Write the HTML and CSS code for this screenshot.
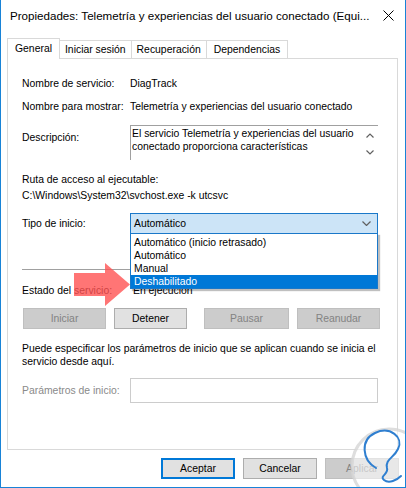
FILE: index.html
```html
<!DOCTYPE html>
<html lang="es">
<head>
  <meta charset="UTF-8" />
  <title>Propiedades: Telemetría y experiencias del usuario conectado</title>
  <link rel="stylesheet" href="styles.css">
</head>
<body>
  <div class="window">
    <div class="titlebar">
      <span class="title">Propiedades: Telemetría y experiencias del usuario conectado (Equi...</span>
      <svg class="close" width="11" height="11" viewBox="0 0 11 11">
        <path d="M0.5 0.5 L10.5 10.5 M10.5 0.5 L0.5 10.5" stroke="#000" stroke-width="1" fill="none"/>
      </svg>
    </div>

    <div class="tabs">
      <div class="tab active">General</div>
      <div class="tab">Iniciar sesión</div>
      <div class="tab">Recuperación</div>
      <div class="tab">Dependencias</div>
    </div>

    <div class="panel">
      <div class="row r-name">
        <span class="label">Nombre de servicio:</span>
        <span>DiagTrack</span>
      </div>
      <div class="row r-display">
        <span class="label">Nombre para mostrar:</span>
        <span>Telemetría y experiencias del usuario conectado</span>
      </div>
      <div class="row r-desc">
        <span class="label desc-label">Descripción:</span>
        <div class="desc-box">
          <div class="desc-text">El servicio Telemetría y experiencias del usuario conectado proporciona características</div>
          <div class="scroll">
            <svg width="8" height="5" viewBox="0 0 8 5"><path d="M0.5 4.5 L4 1 L7.5 4.5" stroke="#606060" stroke-width="1.2" fill="none"/></svg>
            <svg width="8" height="5" viewBox="0 0 8 5"><path d="M0.5 0.5 L4 4 L7.5 0.5" stroke="#606060" stroke-width="1.2" fill="none"/></svg>
          </div>
        </div>
      </div>
      <div class="path-label">Ruta de acceso al ejecutable:</div>
      <div class="path">C:\Windows\System32\svchost.exe -k utcsvc</div>

      <div class="row r-type">
        <span class="label">Tipo de inicio:</span>
        <div class="combo">
          <span>Automático</span>
          <svg width="9" height="5" viewBox="0 0 9 5"><path d="M0.5 0.5 L4.5 4.5 L8.5 0.5" stroke="#606060" stroke-width="1.2" fill="none"/></svg>
          <ul class="dropdown">
            <li>Automático (inicio retrasado)</li>
            <li>Automático</li>
            <li>Manual</li>
            <li class="selected">Deshabilitado</li>
          </ul>
        </div>
      </div>

      <div class="separator"></div>

      <div class="row r-state">
        <span class="label">Estado del servicio:</span>
        <span class="state">En ejecución</span>
      </div>

      <div class="service-buttons">
        <button class="btn disabled b-start">Iniciar</button>
        <button class="btn b-stop">Detener</button>
        <button class="btn disabled b-pause">Pausar</button>
        <button class="btn disabled b-resume">Reanudar</button>
      </div>

      <p class="hint">Puede especificar los parámetros de inicio que se aplican cuando se inicia el servicio desde aquí.</p>

      <div class="row r-params">
        <span class="label muted">Parámetros de inicio:</span>
        <div class="input"></div>
      </div>
    </div>

    <div class="footer">
      <button class="btn primary">Aceptar</button>
      <button class="btn">Cancelar</button>
      <button class="btn disabled">Aplicar</button>
    </div>

    <!-- red pointer over the dialog -->
    <svg class="arrow" width="62" height="50" viewBox="0 0 62 50">
      <polygon points="3,10 34,10 34,0 59,21.5 34,43 34,33 3,33" fill="#ff5252" fill-opacity="0.8"/>
    </svg>

    <!-- watermark -->
    <svg class="watermark" width="84" height="84" viewBox="0 0 84 84">
      <circle cx="44" cy="48" r="37" fill="#ffffff" fill-opacity="0.55" stroke="#d6d6d6" stroke-opacity="0.8" stroke-width="3"/>
      <path d="M31 50 C17 42 15 22 30 15 C45 8 59 19 53 31 C49 40 40 41 42 50 C44 56 34 58 39 62 C44 66 52 62 56 58" stroke="#2f7fd0" stroke-width="2" fill="none" stroke-linecap="round"/>
    </svg>
  </div>
</body>
</html>
```

FILE: styles.css
```css
body {
  margin: 0;
  background: #ffffff;
}
.window {
  position: relative;
  width: 406px;
  height: 488px;
  box-sizing: border-box;
  border: 1px solid #1883d7;
  border-top: none;
  background: #ffffff;
  font-family: "Liberation Sans", Arial, sans-serif;
  font-size: 10.4px;
  color: #000;
  overflow: hidden;
}
.titlebar {
  height: 30px;
  display: flex;
  align-items: center;
  padding-left: 9px;
  font-size: 11.6px;
}
.title {
  flex: 1;
}
.close {
  margin-right: 11px;
}
.tabs {
  display: flex;
  align-items: flex-end;
  height: 28px;
  margin-left: 6px;
}
.tab {
  height: 17px;
  line-height: 17px;
  padding: 0 5px;
  border: 1px solid #d9d9d9;
  border-bottom: none;
  margin-left: -1px;
  background: #ffffff;
}
.tab:last-child {
  padding: 0 7px;
}
.tab.active {
  position: relative;
  z-index: 1;
  height: 20px;
  line-height: 20px;
  margin-left: 0;
  margin-bottom: -1px;
  padding: 0 7px;
}
.panel {
  margin-left: 6px;
  width: 391px;
  height: 392px;
  box-sizing: border-box;
  border: 1px solid #d9d9d9;
  padding-left: 14px;
}
.row {
  display: flex;
  align-items: center;
  line-height: 13px;
}
.label {
  width: 108px;
  flex-shrink: 0;
}
.muted {
  color: #8a8a8a;
}
.r-name {
  margin-top: 18px;
}
.r-display {
  margin-top: 10px;
}
.r-desc {
  margin-top: 12px;
  align-items: flex-start;
}
.desc-label {
  padding-top: 6px;
}
.desc-box {
  display: flex;
  width: 248px;
  height: 35px;
  box-sizing: border-box;
  border-top: 1px solid #a0a0a0;
  border-left: 1px solid #a0a0a0;
  padding: 1px 0 0 1px;
}
.desc-text {
  flex: 1;
  line-height: 13px;
}
.scroll {
  width: 17px;
  display: flex;
  flex-direction: column;
  justify-content: space-between;
  align-items: center;
  padding: 6px 0 5px;
  box-sizing: border-box;
  height: 33px;
}
.path-label {
  margin-top: 13px;
  line-height: 13px;
}
.path {
  margin-top: 3px;
  line-height: 13px;
}
.r-type {
  margin-top: 11px;
}
.combo {
  position: relative;
  width: 248px;
  height: 21px;
  box-sizing: border-box;
  border: 1px solid #1a78c9;
  background: #cce4f7;
  display: flex;
  align-items: center;
  justify-content: space-between;
  padding: 0 6px 0 3px;
}
.dropdown {
  position: absolute;
  left: -1px;
  top: 19px;
  width: 248px;
  box-sizing: border-box;
  margin: 0;
  padding: 2px 0 0;
  list-style: none;
  background: #ffffff;
  border: 1px solid #1a78c9;
  box-shadow: 2px 2px 1px rgba(0, 0, 0, 0.25);
  z-index: 2;
}
.dropdown li {
  height: 13px;
  line-height: 13px;
  padding-left: 3px;
}
.dropdown li.selected {
  background: #0078d7;
  color: #ffffff;
}
.separator {
  margin-top: 35px;
  width: 356px;
  height: 1px;
  background: #a0a0a0;
}
.r-state {
  margin-top: 14px;
}
.state {
  padding-left: 3px;
}
.service-buttons {
  display: flex;
  margin-top: 11px;
}
.btn {
  height: 21px;
  box-sizing: border-box;
  border: 1px solid #adadad;
  background: #e1e1e1;
  font-family: inherit;
  font-size: inherit;
  color: #000;
  padding: 0;
}
.btn.disabled {
  background: #cccccc;
  border-color: #bfbfbf;
  color: #838383;
}
.b-start {
  width: 83px;
  margin-left: 1px;
}
.b-stop {
  width: 73px;
  margin-left: 8px;
}
.b-pause {
  width: 85px;
  margin-left: 17px;
}
.b-resume {
  width: 83px;
  margin-left: 8px;
}
.hint {
  margin: 13px 0 0;
  line-height: 13px;
  width: 354px;
}
.r-params {
  margin-top: 10px;
}
.input {
  width: 248px;
  height: 25px;
  box-sizing: border-box;
  border: 1px solid #cccccc;
}
.footer {
  display: flex;
  justify-content: flex-end;
  gap: 8px;
  margin-top: 8px;
  padding-right: 6px;
}
.footer .btn {
  width: 74px;
}
.footer .btn.primary {
  border: 2px solid #0078d7;
}
.arrow {
  position: absolute;
  left: 70px;
  top: 263px;
  z-index: 3;
}
.watermark {
  position: absolute;
  left: 344px;
  top: 418px;
  z-index: 4;
}
```
